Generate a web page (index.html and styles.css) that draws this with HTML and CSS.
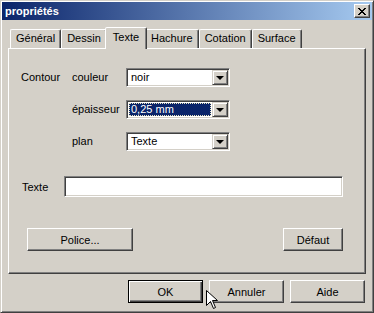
FILE: index.html
```html
<!DOCTYPE html>
<html lang="fr">
<head>
    <meta charset="UTF-8">
    <title>propriétés</title>
    <link rel="stylesheet" href="styles.css">
</head>
<body>
    <div class="window">
        <div class="titlebar">
            <span class="title">propriétés</span>
            <button class="close">
                <svg width="8" height="7" viewBox="0 0 8 7">
                    <path d="M0 0h2v1h-2zM6 0h2v1h-2zM1 1h2v1h-2zM5 1h2v1h-2zM2 2h4v1h-4zM3 3h2v1h-2zM2 4h4v1h-4zM1 5h2v1h-2zM5 5h2v1h-2zM0 6h2v1h-2zM6 6h2v1h-2z" fill="#000"/>
                </svg>
            </button>
        </div>

        <div class="content">
            <div class="tabs">
                <div class="tab">Général</div>
                <div class="tab">Dessin</div>
                <div class="tab active">Texte</div>
                <div class="tab">Hachure</div>
                <div class="tab">Cotation</div>
                <div class="tab">Surface</div>
            </div>

            <div class="panel">
                <div class="contour">
                    <span class="label">Contour</span>
                    <span class="label">couleur</span>
                    <div class="combo">
                        <span class="combo-value">noir</span>
                        <span class="combo-btn"><span class="arrow"></span></span>
                    </div>

                    <span></span>
                    <span class="label">épaisseur</span>
                    <div class="combo">
                        <span class="combo-value selected">0,25 mm</span>
                        <span class="combo-btn"><span class="arrow"></span></span>
                    </div>

                    <span></span>
                    <span class="label">plan</span>
                    <div class="combo">
                        <span class="combo-value">Texte</span>
                        <span class="combo-btn"><span class="arrow"></span></span>
                    </div>
                </div>

                <div class="field-row">
                    <label for="texte">Texte</label>
                    <input type="text" id="texte" class="textbox">
                </div>

                <div class="panel-buttons">
                    <button class="btn btn-police">Police...</button>
                    <button class="btn btn-defaut">Défaut</button>
                </div>
            </div>

            <div class="dialog-buttons">
                <button class="btn btn-default">OK</button>
                <button class="btn">Annuler</button>
                <button class="btn">Aide</button>
            </div>
        </div>

        <!-- mouse pointer over the dialog -->
        <svg class="cursor" width="12" height="20" viewBox="0 0 12 20">
            <path d="M0.5 0.5 L0.5 15.5 L4.5 11.5 L7.5 18.5 L9.5 17.5 L6.5 10.5 L11.5 10.5 Z" fill="#fff" stroke="#000" stroke-width="1"/>
        </svg>
    </div>
</body>
</html>
```

FILE: styles.css
```css
body {
    margin: 0;
    background-color: #d4d0c8;
    font-family: "Liberation Sans", Arial, sans-serif;
    font-size: 11px;
    color: #000;
}
.window {
    position: relative;
    width: 374px;
    height: 313px;
    box-sizing: border-box;
    border: 1px solid;
    border-color: #d4d0c8 #404040 #404040 #d4d0c8;
    box-shadow: inset 1px 1px #fff, inset -1px -1px #808080;
    padding: 1px;
    background-color: #d4d0c8;
    display: flex;
    flex-direction: column;
}
.titlebar {
    height: 18px;
    background: linear-gradient(to right, #0a246a, #a6caf0);
    display: flex;
    align-items: center;
    justify-content: space-between;
    padding: 0 2px 0 3px;
}
.title {
    color: #fff;
    font-weight: bold;
    font-size: 11px;
}
.close {
    width: 16px;
    height: 14px;
    box-sizing: border-box;
    padding: 0;
    border: 1px solid;
    border-color: #fff #404040 #404040 #fff;
    box-shadow: inset -1px -1px #808080;
    background-color: #d4d0c8;
    display: flex;
    align-items: center;
    justify-content: center;
}
.close svg {
    display: block;
}
.content {
    flex: 1;
    display: flex;
    flex-direction: column;
    padding: 7px 6px 0 6px;
}

/* tabs */
.tabs {
    display: flex;
    align-items: flex-end;
    height: 21px;
    padding-left: 2px;
}
.tab {
    height: 19px;
    box-sizing: border-box;
    padding: 0 5px;
    border: 1px solid;
    border-bottom: none;
    border-color: #fff #404040 transparent #fff;
    box-shadow: inset -1px 0 #808080;
    border-radius: 2px 2px 0 0;
    line-height: 17px;
    white-space: nowrap;
}
.tab.active {
    position: relative;
    z-index: 1;
    height: 22px;
    margin: 0 -2px -1px;
    padding: 0 7px;
    background-color: #d4d0c8;
    line-height: 18px;
}

/* panel */
.panel {
    position: relative;
    height: 226px;
    box-sizing: border-box;
    border: 1px solid;
    border-color: #fff #404040 #404040 #fff;
    box-shadow: inset -1px -1px #808080;
    padding: 19px 22px 0 12px;
}
.contour {
    display: grid;
    grid-template-columns: 51px 54px 104px;
    grid-auto-rows: 19px;
    row-gap: 13px;
    align-items: center;
}
.label {
    line-height: 13px;
}
.combo {
    display: flex;
    height: 19px;
    box-sizing: border-box;
    border: 1px solid;
    border-color: #808080 #fff #fff #808080;
    box-shadow: inset 1px 1px #404040, inset -1px -1px #d4d0c8;
    background-color: #fff;
    padding: 1px;
}
.combo-value {
    flex: 1;
    margin: 1px;
    padding-left: 2px;
    line-height: 13px;
}
.combo-value.selected {
    background-color: #0a246a;
    color: #fff;
    outline: 1px dotted #e8e4c0;
    outline-offset: -1px;
}
.combo-btn {
    width: 16px;
    box-sizing: border-box;
    border: 1px solid;
    border-color: #d4d0c8 #404040 #404040 #d4d0c8;
    box-shadow: inset 1px 1px #fff, inset -1px -1px #808080;
    background-color: #d4d0c8;
    display: flex;
    align-items: center;
    justify-content: center;
}
.arrow {
    width: 0;
    height: 0;
    border-left: 4px solid transparent;
    border-right: 4px solid transparent;
    border-top: 4px solid #000;
}
.field-row {
    display: flex;
    align-items: center;
    margin-top: 25px;
}
.field-row label {
    width: 43px;
    padding-left: 1px;
    box-sizing: border-box;
}
.textbox {
    width: 279px;
    height: 21px;
    box-sizing: border-box;
    margin: 0;
    border: 1px solid;
    border-color: #808080 #fff #fff #808080;
    box-shadow: inset 1px 1px #404040, inset -1px -1px #d4d0c8;
    background-color: #fff;
    outline: none;
}
.panel-buttons {
    display: flex;
    justify-content: space-between;
    margin-top: 31px;
    padding-left: 6px;
}

/* buttons */
.btn {
    height: 23px;
    width: 75px;
    box-sizing: border-box;
    padding: 0;
    font: inherit;
    color: #000;
    background-color: #d4d0c8;
    border: 1px solid;
    border-color: #fff #404040 #404040 #fff;
    box-shadow: inset -1px -1px #808080, inset 1px 1px #d4d0c8;
}
.btn-police {
    width: 106px;
}
.btn-defaut {
    width: 60px;
}
.btn-default {
    border-color: #000;
    box-shadow: inset 1px 1px #fff, inset -1px -1px #404040, inset -2px -2px #808080;
}
.dialog-buttons {
    display: flex;
    justify-content: flex-end;
    gap: 6px;
    margin-top: 6px;
    padding-right: 1px;
}
.cursor {
    position: absolute;
    left: 205px;
    top: 289px;
}
```
